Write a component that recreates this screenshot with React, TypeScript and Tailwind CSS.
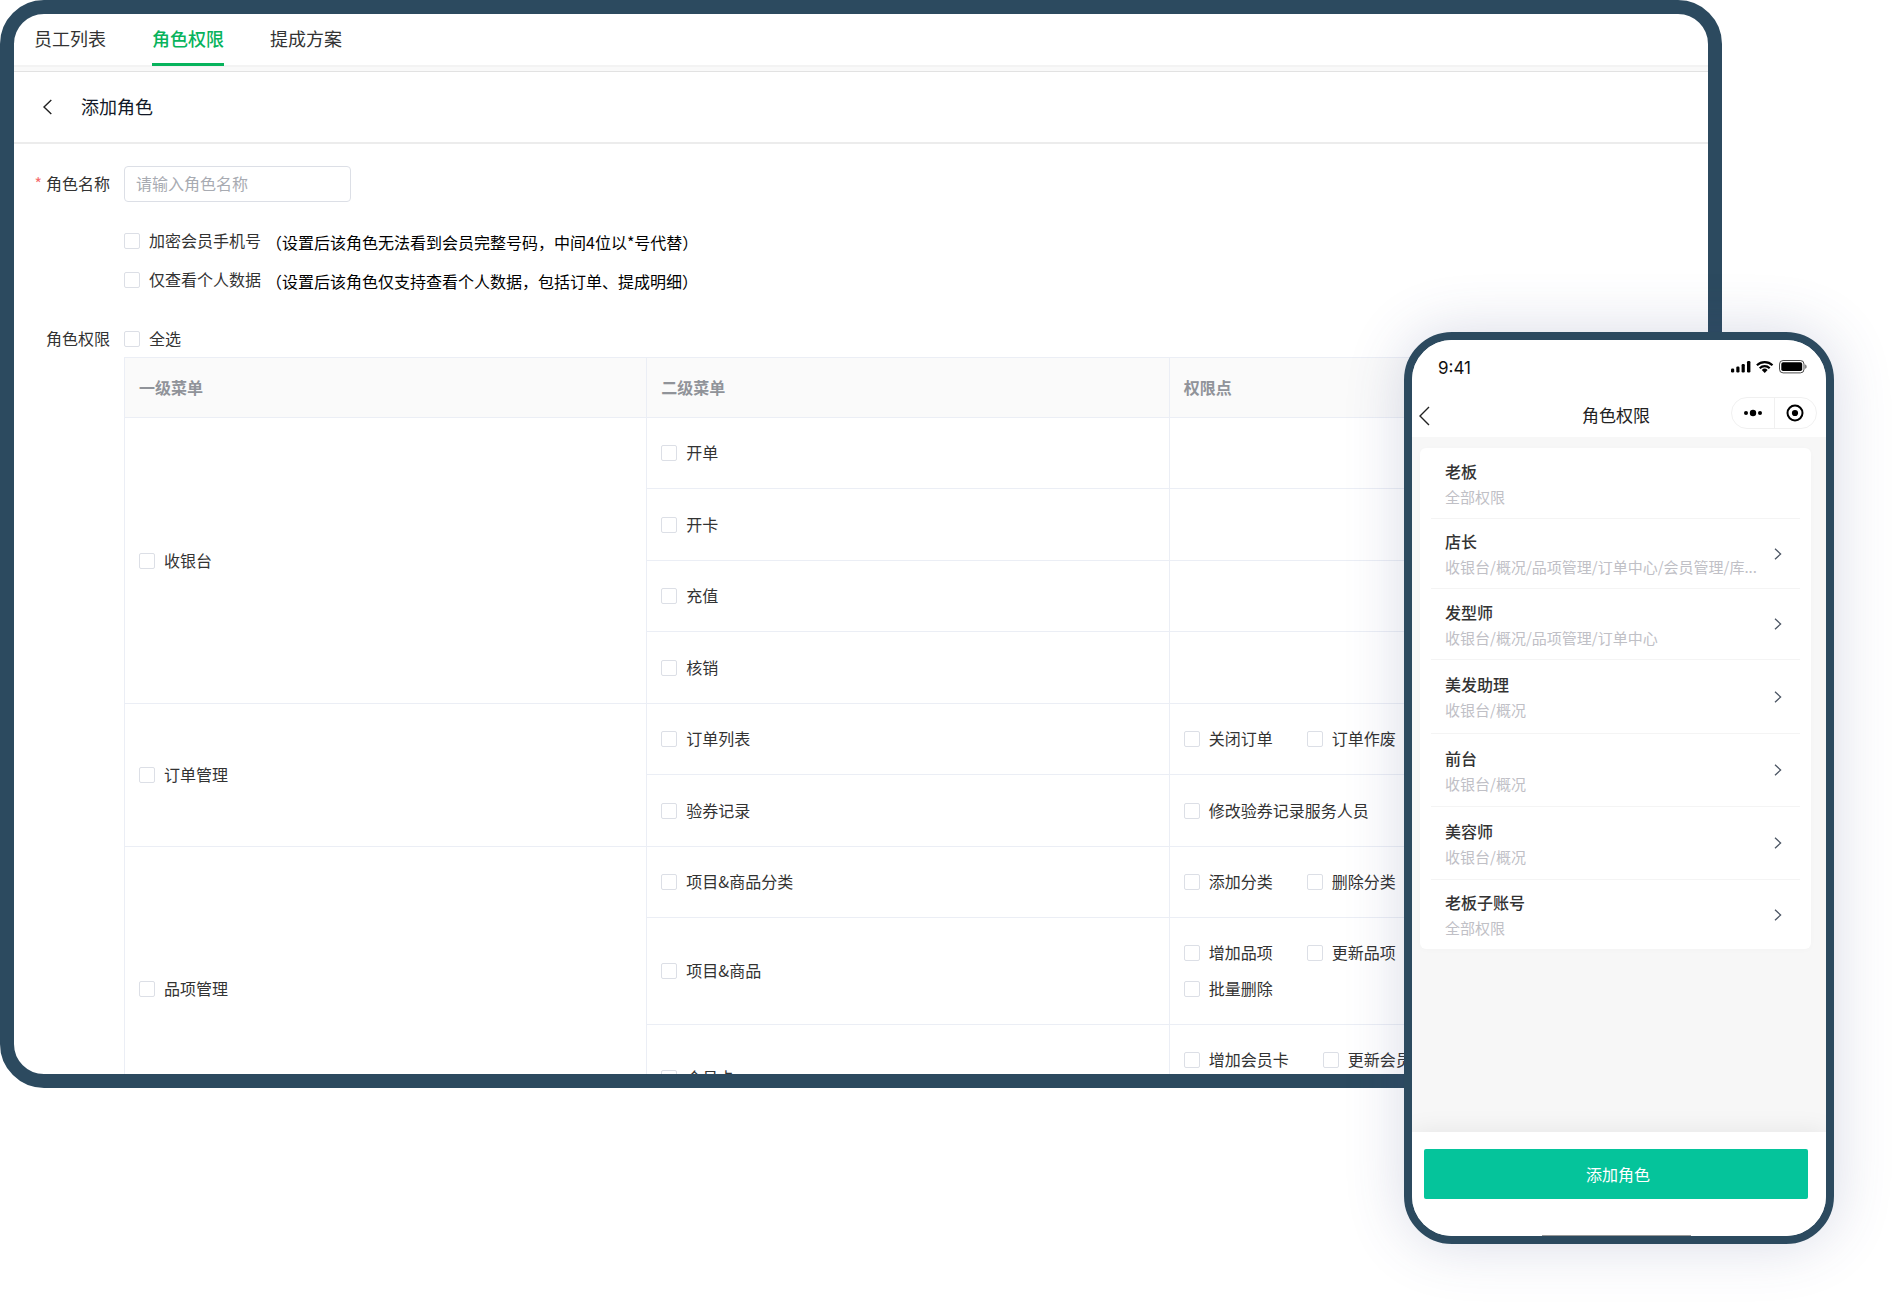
import { clsx } from "clsx"

const tabs = ["员工列表", "角色权限", "提成方案"]

const options = [
  { label: "加密会员手机号", hint: "（设置后该角色无法看到会员完整号码，中间4位以*号代替）" },
  { label: "仅查看个人数据", hint: "（设置后该角色仅支持查看个人数据，包括订单、提成明细）" },
]

type SubMenu = { name: string; points: string[][] }

const menus: { name: string; children: SubMenu[] }[] = [
  {
    name: "收银台",
    children: [
      { name: "开单", points: [] },
      { name: "开卡", points: [] },
      { name: "充值", points: [] },
      { name: "核销", points: [] },
    ],
  },
  {
    name: "订单管理",
    children: [
      { name: "订单列表", points: [["关闭订单", "订单作废"]] },
      { name: "验券记录", points: [["修改验券记录服务人员"]] },
    ],
  },
  {
    name: "品项管理",
    children: [
      { name: "项目&商品分类", points: [["添加分类", "删除分类"]] },
      { name: "项目&商品", points: [["增加品项", "更新品项"], ["批量删除"]] },
      { name: "会员卡", points: [["增加会员卡", "更新会员卡"], []] },
    ],
  },
]

const roles = [
  { name: "老板", scope: "全部权限", height: "h-[71px]", link: false },
  { name: "店长", scope: "收银台/概况/品项管理/订单中心/会员管理/库...", height: "h-[70px]", link: true },
  { name: "发型师", scope: "收银台/概况/品项管理/订单中心", height: "h-[71px]", link: true },
  { name: "美发助理", scope: "收银台/概况", height: "h-[74px]", link: true },
  { name: "前台", scope: "收银台/概况", height: "h-[73px]", link: true },
  { name: "美容师", scope: "收银台/概况", height: "h-[73px]", link: true },
  { name: "老板子账号", scope: "全部权限", height: "h-[69px]", link: true },
]

function Check({ label }: { label: string }) {
  return (
    <label className="inline-flex items-center gap-[9px] whitespace-nowrap">
      <input
        type="checkbox"
        className="size-4 shrink-0 appearance-none rounded-[2px] border border-[#dcdfe6] bg-white checked:border-[#07b35c] checked:bg-[#07b35c]"
      />
      <span className="pb-0.5">{label}</span>
    </label>
  )
}

function PermissionTable() {
  return (
    <table className="w-full table-fixed border-collapse text-left">
      <thead>
        <tr className="h-[60px] bg-[#fafafa] text-[#909399]">
          {["一级菜单", "二级菜单", "权限点"].map((title) => (
            <th key={title} className="border border-[#ebeef5] px-[14px] pb-0.5 font-bold">
              {title}
            </th>
          ))}
        </tr>
      </thead>
      <tbody>
        {menus.map((menu) =>
          menu.children.map((child, i) => (
            <tr
              key={child.name}
              className={child.points.length > 1 ? "h-[107px]" : "odd:h-[71px] even:h-[72px]"}
            >
              {i === 0 && (
                <td rowSpan={menu.children.length} className="border border-[#ebeef5] px-[14px]">
                  <Check label={menu.name} />
                </td>
              )}
              <td className="border border-[#ebeef5] px-[14px]">
                <Check label={child.name} />
              </td>
              <td className="border border-[#ebeef5] px-[14px]">
                {child.points.map((line, row) => (
                  <div key={row} className="flex h-9 items-center gap-[34px]">
                    {line.map((point) => (
                      <Check key={point} label={point} />
                    ))}
                  </div>
                ))}
              </td>
            </tr>
          ))
        )}
      </tbody>
    </table>
  )
}

function Desktop() {
  return (
    <main className="mr-[170px] h-[1088px] overflow-hidden rounded-[44px] border-[14px] border-[#2c4a5f] bg-white">
      <nav className="flex h-[51px] items-start gap-[46px] pl-5 text-lg">
        {tabs.map((tab, i) => (
          <a
            key={tab}
            href="#"
            className={clsx(
              "relative flex h-[52px] items-center border-b-[3px] pb-0.5",
              i === 1 ? "border-[#07b35c] font-medium text-[#07b35c]" : "border-transparent"
            )}
          >
            {tab}
          </a>
        ))}
      </nav>
      <div className="h-[7px] border-t-2 border-b border-t-[#f3f3f3] border-b-[#e2e2e2] bg-[#f9f9f9]" />

      <header className="flex h-[72px] items-center gap-7 border-b-2 border-[#ececec] pl-7">
        <button type="button" aria-label="返回">
          <svg className="h-4 w-[11px]" viewBox="0 0 11 16" fill="none" stroke="#222" strokeWidth="1.4">
            <path d="M9.3 1 2 8l7.3 7" />
          </svg>
        </button>
        <h1 className="pb-0.5 text-lg text-[#111827]">添加角色</h1>
      </header>

      <form className="grid grid-cols-[96px_1fr] gap-x-[14px] pt-[22px] pr-4">
        <label htmlFor="role-name" className="flex items-center justify-end pb-0.5">
          <span className="mr-1 text-[#f56c6c]">*</span>角色名称
        </label>
        <input
          id="role-name"
          placeholder="请输入角色名称"
          className="h-[36px] w-[227px] rounded border border-[#dcdfe6] px-[11px] pb-0.5 placeholder:text-[#a8abb2]"
        />

        <div className="col-start-2 pt-[19px]">
          {options.map((option) => (
            <div key={option.label} className="flex h-[39px] items-center gap-[5px]">
              <Check label={option.label} />
              <span className="pt-0.5 text-black">{option.hint}</span>
            </div>
          ))}
        </div>

        <span className="mt-[22px] flex h-9 items-center justify-end pb-0.5">角色权限</span>
        <div className="mt-[22px]">
          <div className="flex h-9 items-center">
            <Check label="全选" />
          </div>
          <PermissionTable />
        </div>
      </form>
    </main>
  )
}

function StatusIcons() {
  return (
    <svg className="h-4 w-[78px]" viewBox="0 2 78 16" fill="none" overflow="visible">
      <g fill="#000">
        <rect x="1" y="9.5" width="3.2" height="4" rx="1.2" />
        <rect x="6.3" y="7.5" width="3.2" height="6" rx="1.2" />
        <rect x="11.6" y="5" width="3.2" height="8.5" rx="1.2" />
        <rect x="17" y="2" width="3.4" height="11.5" rx="1.2" />
        <path d="M34.7 13.9l-2.9-2.9a4.2 4.2 0 0 1 5.8 0z" />
      </g>
      <g stroke="#000" strokeWidth="2.2">
        <path d="M26.9 6.2a11.4 11.4 0 0 1 15.6 0" />
        <path d="M29.7 9.2a7.3 7.3 0 0 1 10 0" />
      </g>
      <rect x="49.5" y="1.5" width="24.5" height="12.4" rx="3.6" stroke="#000" strokeOpacity=".7" />
      <rect x="51.3" y="3.3" width="20.9" height="8.8" rx="1.8" fill="#000" />
      <path d="M75.2 5.6v4.2c.9-.3 1.4-1.1 1.4-2.1s-.5-1.8-1.4-2.1z" fill="#000" fillOpacity=".6" />
    </svg>
  )
}

function Phone() {
  return (
    <section className="absolute top-[332px] right-[58px] flex h-[912px] w-[430px] flex-col overflow-hidden rounded-[48px] border-8 border-[#2c4a5f] bg-[#f7f7f7] shadow-[0_0_60px_rgba(60,70,130,0.2)]">
      <div className="flex h-[57px] items-center justify-between bg-white pr-[18px] pl-[26px]">
        <span className="font-[Inter] text-[17px] text-[#111]">9:41</span>
        <StatusIcons />
      </div>
      <header className="grid h-10 grid-cols-[1fr_auto_1fr] items-start bg-white pr-[9px] pl-[3px]">
        <button type="button" aria-label="返回" className="flex h-[38px] items-center pl-[3px]">
          <svg className="h-5 w-3" viewBox="0 0 12 20" fill="none" stroke="#222" strokeWidth="1.4">
            <path d="M11 1 2 10l9 9" />
          </svg>
        </button>
        <h2 className="text-[17px] leading-9 text-[#222]">角色权限</h2>
        <div className="flex h-8 w-[86px] divide-x divide-[#f0f0f0] justify-self-end rounded-full border border-[#f0f0f0]">
          <button type="button" aria-label="更多" className="flex flex-1 items-center justify-center">
            <svg className="h-2 w-5" viewBox="0 0 20 8">
              <circle cx="3" cy="4" r="2" />
              <circle cx="10" cy="4" r="3.2" />
              <circle cx="17" cy="4" r="2" />
            </svg>
          </button>
          <button type="button" aria-label="关闭" className="flex flex-1 items-center justify-center">
            <svg className="size-5" viewBox="0 0 20 20">
              <circle cx="10" cy="10" r="7.5" fill="none" stroke="#000" strokeWidth="2" />
              <circle cx="10" cy="10" r="3.1" />
            </svg>
          </button>
        </div>
      </header>

      <ul className="mt-[11px] mr-[15px] ml-2 rounded-md bg-white px-[11px] shadow-[0_1px_6px_rgba(0,0,0,0.02)]">
        {roles.map((role) => (
          <li
            key={role.name}
            className={clsx(
              "flex items-center justify-between border-b border-[#f4f4f4] pr-[18px] pl-[14px] last:border-b-0",
              role.height
            )}
          >
            <div className="flex flex-col gap-[5px] whitespace-nowrap">
              <h3 className="leading-[22px] font-medium">{role.name}</h3>
              <p className="text-[15px] leading-5 text-[#c0c0c6]">{role.scope}</p>
            </div>
            {role.link && (
              <a href="#" aria-label={role.name}>
                <svg className="h-3 w-2" viewBox="0 0 8 12" fill="none" stroke="#4b5563" strokeWidth="1.3">
                  <path d="M1 .8 6.6 6 1 11.2" />
                </svg>
              </a>
            )}
          </li>
        ))}
      </ul>

      <footer className="mt-auto flex h-[104px] flex-col justify-between bg-white pt-[17px] pr-[18px] pl-3 shadow-[0_0_24px_rgba(0,0,0,0.08)]">
        <button type="button" className="h-[50px] w-full rounded-xs bg-[#05c49b] pl-1 text-white">
          添加角色
        </button>
        <div className="h-px w-[149px] self-center bg-[#999]" />
      </footer>
    </section>
  )
}

export default function App() {
  return (
    <div
      lang="zh-CN"
      className="relative min-h-[1304px] bg-white font-['Noto_Sans_CJK_SC',sans-serif] text-base text-[#333]"
    >
      <Desktop />
      <Phone />
    </div>
  )
}
